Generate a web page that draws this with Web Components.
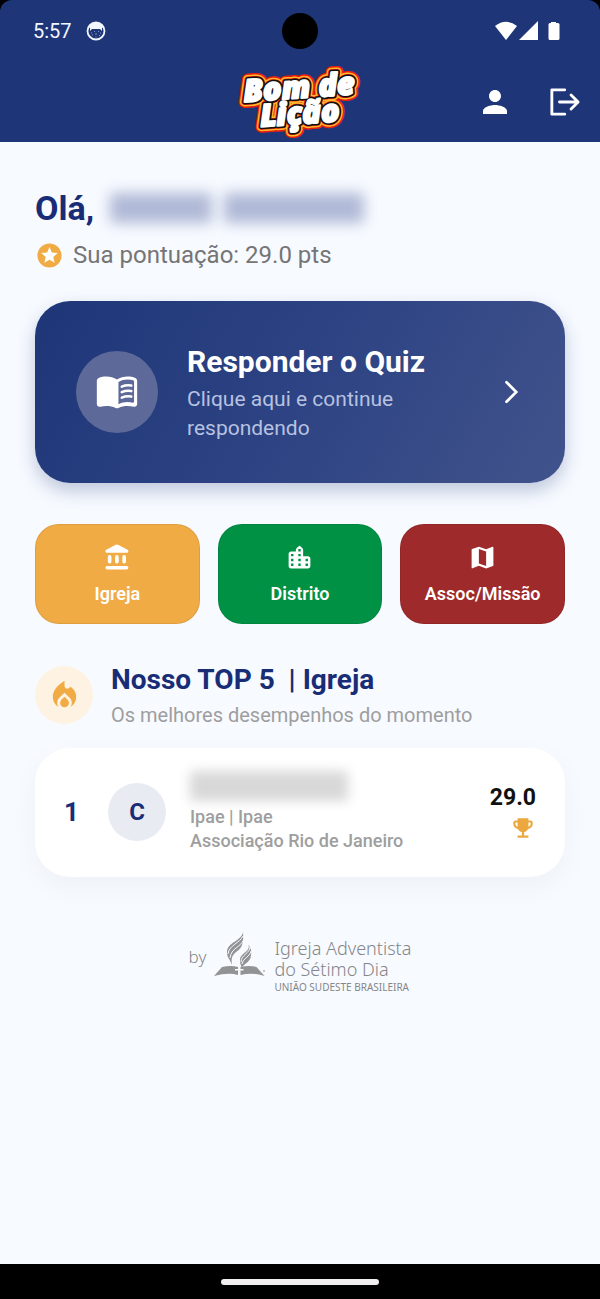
<!DOCTYPE html>
<html lang="pt-BR">
<head>
<meta charset="UTF-8">
<meta name="viewport" content="width=device-width, initial-scale=1">
<title>Bom de Lição</title>
<style>
    body {
        margin: 0;
        background: #000;
        font-family: Roboto, "Liberation Sans", sans-serif;
        --azul: #1e3678;
        --azul-texto: #182d75;
        --laranja: #f1ab45;
        --verde: #009145;
        --vermelho: #9f2a2b;
    }
</style>
</head>
<body>
<app-screen>
    <status-bar slot="top" time="5:57"></status-bar>
    <app-header slot="top"></app-header>
    <user-greeting points="29.0">Olá,</user-greeting>
    <quiz-card>
        <span slot="title">Responder o Quiz</span>
        <span slot="text">Clique aqui e continue respondendo</span>
    </quiz-card>
    <filter-row>
        <filter-button icon="bank" style="--cor: var(--laranja)">Igreja</filter-button>
        <filter-button icon="city" style="--cor: var(--verde)">Distrito</filter-button>
        <filter-button icon="map" style="--cor: var(--vermelho)">Assoc/Missão</filter-button>
    </filter-row>
    <top-heading>
        <span slot="title">Nosso TOP 5&nbsp; | Igreja</span>
        <span slot="text">Os melhores desempenhos do momento</span>
    </top-heading>
    <ranking-card position="1" initial="C" score="29.0">
        <span slot="church">Ipae | Ipae</span>
        <span slot="region">Associação Rio de Janeiro</span>
    </ranking-card>
    <brand-footer></brand-footer>
    <nav-bar slot="bottom"></nav-bar>
</app-screen>

<script>
// Ícones
const ICONS = {
    person: '<path d="M12 12c2.21 0 4-1.79 4-4s-1.79-4-4-4-4 1.79-4 4 1.79 4 4 4zm0 2c-2.67 0-8 1.34-8 4v2h16v-2c0-2.66-5.33-4-8-4z"/>',
    logout: '<path d="M12.5 3.9H3.9v16.2h8.600M9 12h12M16.700 7.300 21.400 12l-4.700 4.700" fill="none" stroke="currentColor" stroke-width="1.900" stroke-linejoin="round" stroke-linecap="round"/>',
    stars: '<circle cx="12" cy="12" r="9" fill="#fff"/><path d="M11.99 2C6.47 2 2 6.48 2 12s4.47 10 9.99 10C17.52 22 22 17.52 22 12S17.52 2 11.99 2zm4.24 16L12 15.45 7.77 18l1.12-4.81-3.73-3.23 4.92-.42L12 5l1.92 4.53 4.92.42-3.73 3.23L16.23 18z"/>',
    book: '<path d="M12 5.200C10.300 4 8.300 3.500 6.200 3.500c-1.500 0-2.900.2-4.200.8-.6.300-1 .9-1 1.500v12.800c0 1 .9 1.700 1.900 1.400 1-.3 2.200-.4 3.300-.4 1.700 0 3.700.3 5 1.100.5.300 1.100.3 1.600 0 1.300-.8 3.300-1.100 5-1.100 1.100 0 2.300.1 3.300.4 1 .300 1.900-.4 1.900-1.400V5.800c0-.6-.4-1.200-1-1.500-1.300-.6-2.700-.8-4.200-.8-2.100 0-4.100.5-5.800 1.700z"/><path d="M12.800 6.600c1.400-1 3.200-1.400 5-1.400 1.100 0 2.100.1 3 .4.300.1.500.4.500.7v10.900c0 .4-.300.7-.7.6-.9-.2-1.900-.3-2.800-.3-1.700 0-3.600.4-5 1.200z" fill="#5d6999"/><path d="M14.600 9.100c1.600-.7 3.400-.9 5.200-.6M14.600 12.100c1.600-.7 3.400-.9 5.200-.6M14.600 15.100c1.600-.7 3.400-.9 5.200-.6" fill="none" stroke="currentColor" stroke-width="1.400" stroke-linecap="round"/>',
    chevron: '<path d="M9 5.500 15.500 12 9 18.500" fill="none" stroke="currentColor" stroke-width="1.800" stroke-linecap="round"/>',
    bank: '<path d="M4 11.500v4a1.500 1.500 0 0 0 3 0v-4a1.500 1.500 0 0 0-3 0zm6 0v4a1.500 1.500 0 0 0 3 0v-4a1.500 1.500 0 0 0-3 0zM3.500 22h16a1.500 1.500 0 0 0 0-3h-16a1.500 1.500 0 0 0 0 3zM16 11.500v4a1.500 1.500 0 0 0 3 0v-4a1.500 1.500 0 0 0-3 0zM10.570 1.490l-7.900 4.160c-.41.210-.67.640-.67 1.110C2 7.450 2.550 8 3.240 8h16.530C20.450 8 21 7.450 21 6.760c0-.47-.26-.9-.67-1.110l-7.900-4.160a2 2 0 0 0-1.860 0z"/>',
    city: '<path d="M15 11V5.830c0-.53-.21-1.040-.59-1.410L12.700 2.710a1 1 0 0 0-1.410 0l-1.700 1.700C9.210 4.790 9 5.300 9 5.830V7H5c-1.100 0-2 .9-2 2v10c0 1.100.9 2 2 2h14c1.100 0 2-.9 2-2v-6c0-1.100-.9-2-2-2h-4zm-8 8H5v-2h2v2zm0-4H5v-2h2v2zm0-4H5V9h2v2zm6 8h-2v-2h2v2zm0-4h-2v-2h2v2zm0-4h-2V9h2v2zm0-4h-2V5h2v2zm6 12h-2v-2h2v2zm0-4h-2v-2h2v2z"/>',
    map: '<path d="M20.500 3l-.16.030L15 5.100 9 3 3.360 4.900c-.21.070-.36.250-.36.480V20.500c0 .28.220.5.5.5l.16-.03L9 18.900l6 2.100 5.640-1.900c.21-.07.36-.25.36-.48V3.500c0-.28-.22-.5-.5-.5zM15 19l-6-2.110V5l6 2.110V19z"/>',
    fire: '<path d="M12 12.900l-2.130 2.090C9.310 15.550 9 16.280 9 17.060 9 18.680 10.350 20 12 20s3-1.320 3-2.940c0-.78-.31-1.520-.87-2.070L12 12.900z"/><path d="M16 6l-.44.550C14.380 8.020 12 7.190 12 5.300V2S4 6 4 13c0 2.920 1.560 5.470 3.890 6.860-.56-.79-.89-1.760-.89-2.800 0-1.320.52-2.560 1.470-3.500L12 10.100l3.530 3.470c.95.930 1.470 2.170 1.470 3.500 0 1.020-.31 1.960-.85 2.750 1.890-1.150 3.290-3.060 3.710-5.300.66-3.550-1.070-6.900-3.860-8.520z"/>',
    trophy: '<path d="M19 5h-2V3H7v2H5c-1.100 0-2 .9-2 2v1c0 2.550 1.920 4.630 4.390 4.940.63 1.500 1.980 2.630 3.610 2.960V19H7v2h10v-2h-4v-3.100c1.630-.33 2.980-1.460 3.610-2.960C19.080 12.630 21 10.550 21 8V7c0-1.100-.9-2-2-2zM5 8V7h2v3.820C5.840 10.400 5 9.300 5 8zm14 0c0 1.300-.84 2.400-2 2.820V7h2v1z"/>'
};

class AppIcon extends HTMLElement {
    constructor() {
        super();
        this.attachShadow({ mode: 'open' });
    }

    connectedCallback() {
        this.shadowRoot.innerHTML = `
            <style>
                :host {
                    display: block;
                    flex: none;
                    width: var(--size, 24px);
                    height: var(--size, 24px);
                }

                svg {
                    display: block;
                    width: 100%;
                    height: 100%;
                    fill: currentColor;
                }
            </style>
            <svg viewBox="0 0 24 24" aria-hidden="true">${ICONS[this.getAttribute('name')]}</svg>
        `;
    }
}

// Estrutura da tela
class AppScreen extends HTMLElement {
    constructor() {
        super();
        this.attachShadow({ mode: 'open' });
    }

    connectedCallback() {
        this.shadowRoot.innerHTML = `
            <style>
                :host {
                    display: flex;
                    flex-direction: column;
                    min-height: 100vh;
                }

                .top {
                    background: var(--azul);
                    border-radius: 12px 12px 0 0;
                }

                main {
                    flex: 1;
                    display: flex;
                    flex-direction: column;
                    padding: 44px 35px 24px;
                    background: #f7faff;
                }
            </style>
            <div class="top"><slot name="top"></slot></div>
            <main><slot></slot></main>
            <slot name="bottom"></slot>
        `;
    }
}

class StatusBar extends HTMLElement {
    constructor() {
        super();
        this.attachShadow({ mode: 'open' });
    }

    connectedCallback() {
        this.shadowRoot.innerHTML = `
            <style>
                :host {
                    display: flex;
                    align-items: center;
                    height: 61px;
                    padding: 0 40px 0 33px;
                    color: #f2f6ff;
                    position: relative;
                    font-size: 20px;
                }

                .cat {
                    margin-left: 14px;
                }

                .icons {
                    margin-left: auto;
                }

                svg {
                    display: block;
                }

                /* furo da câmera */
                .camera {
                    position: absolute;
                    left: 50%;
                    top: 50%;
                    width: 36px;
                    height: 36px;
                    border-radius: 50%;
                    background: #000;
                    transform: translate(-50%, -50%);
                }
            </style>
            <span>${this.getAttribute('time')}</span>
            <svg class="cat" width="20" height="20" viewBox="0 0 20 20" aria-hidden="true">
                <circle cx="10" cy="10" r="8.500" fill="none" stroke="#f2f6ff" stroke-width="1.800"/>
                <path d="M2.500 7C4 3 7 1 10 1s6 2 7.500 6L16 6.500V10l-2-2H6l-2 2V6.500z" fill="#f2f6ff"/>
                <path d="M5 12h1M8 10.500h1M12 10.500h1M14 12h1M6 14h1M9 13h2M13 14.500h1M9.500 16h1" stroke="#8496c8" stroke-width="1"/>
            </svg>
            <span class="camera"></span>
            <svg class="icons" width="65" height="20" viewBox="0 0 65 20" fill="#fff" aria-hidden="true">
                <path d="M0 5Q11-3.500 22 5L11 19z"/>
                <path d="M43 0v19H24z"/>
                <path d="M56 1h5v1h2q1.500 0 1.500 1.500v14q0 1.500-1.500 1.500h-8q-1.500 0-1.500-1.500v-14Q53.500 2 55 2h1z"/>
            </svg>
        `;
    }
}

class AppHeader extends HTMLElement {
    constructor() {
        super();
        this.attachShadow({ mode: 'open' });
    }

    connectedCallback() {
        this.shadowRoot.innerHTML = `
            <style>
                :host {
                    display: grid;
                    grid-template-columns: 1fr auto 1fr;
                    align-items: center;
                    height: 81px;
                    padding: 0 18px;
                    color: #fff;
                }

                .logo {
                    grid-column: 2;
                    display: block;
                }

                nav {
                    display: flex;
                    justify-content: flex-end;
                    gap: 33px;
                }

                button {
                    padding: 0;
                    border: 0;
                    background: none;
                    color: inherit;
                    cursor: pointer;
                }

                app-icon {
                    --size: 36px;
                }
            </style>
            <svg class="logo" width="130" height="80" viewBox="0 0 130 80" role="img" aria-label="Bom de Lição">
                <g stroke-linejoin="round">
                    <use href="#marca" fill="#ec1c0c" stroke="#ec1c0c" stroke-width="12"/>
                    <use href="#marca" fill="#ffb82b" stroke="#ffb82b" stroke-width="9"/>
                    <use href="#marca" fill="#ec1c0c" stroke="#ec1c0c" stroke-width="6"/>
                    <use href="#marca" fill="#111" stroke="#111" stroke-width="5"/>
                </g>
                <g fill="#fff" stroke="#fff" stroke-width="2" stroke-linejoin="round">
                    <g id="marca" font-family="'Open Sans', sans-serif" font-weight="800" font-style="italic" text-anchor="middle" transform="rotate(-4 65 40)">
                        <text x="65" y="36" font-size="31">Bom de</text>
                        <text x="64" y="62" font-size="31">Lição</text>
                    </g>
                </g>
            </svg>
            <nav>
                <button aria-label="Perfil"><app-icon name="person"></app-icon></button>
                <button aria-label="Sair"><app-icon name="logout"></app-icon></button>
            </nav>
        `;
    }
}

// Saudação e pontuação
class UserGreeting extends HTMLElement {
    constructor() {
        super();
        this.attachShadow({ mode: 'open' });
    }

    connectedCallback() {
        this.shadowRoot.innerHTML = `
            <style>
                :host {
                    display: block;
                }

                h1 {
                    display: flex;
                    align-items: center;
                    gap: 16px;
                    margin: 0;
                    font-size: 34px;
                    line-height: 44px;
                    color: var(--azul-texto);
                }

                .name {
                    display: flex;
                    gap: 12px;
                    filter: blur(7px);
                }

                .name i {
                    height: 30px;
                    width: 102px;
                    background: #b0b9d6;
                }

                .name i + i {
                    width: 140px;
                }

                p {
                    display: flex;
                    align-items: center;
                    gap: 9px;
                    margin: 10px 0 0;
                    font-size: 24px;
                    line-height: 30px;
                    color: #757575;
                }

                app-icon {
                    --size: 29px;
                    color: var(--laranja);
                }
            </style>
            <h1><slot></slot><span class="name" aria-hidden="true"><i></i><i></i></span></h1>
            <p><app-icon name="stars"></app-icon><span>Sua pontuação: ${this.getAttribute('points')} pts</span></p>
        `;
    }
}

class QuizCard extends HTMLElement {
    constructor() {
        super();
        this.attachShadow({ mode: 'open' });
    }

    connectedCallback() {
        this.shadowRoot.innerHTML = `
            <style>
                :host {
                    display: block;
                    margin-top: 31px;
                }

                button {
                    display: flex;
                    align-items: center;
                    gap: 29px;
                    width: 100%;
                    min-height: 182px;
                    padding: 40px 36px 40px 41px;
                    border: 0;
                    border-radius: 35px;
                    background: linear-gradient(120deg, #1e3678, #2d4383 50%, #41538c);
                    box-shadow: 0 8px 18px rgba(30, 54, 120, 0.26);
                    color: #fff;
                    font: inherit;
                    text-align: left;
                    cursor: pointer;
                }

                .badge {
                    display: grid;
                    place-items: center;
                    flex: none;
                    width: 82px;
                    height: 82px;
                    border-radius: 50%;
                    background: #5d6999;
                }

                .badge app-icon {
                    --size: 44px;
                }

                .texts {
                    flex: 1;
                    padding-top: 2px;
                }

                .title {
                    display: block;
                    font-size: 30px;
                    font-weight: 700;
                    line-height: 38px;
                }

                .text {
                    display: block;
                    max-width: 260px;
                    margin-top: 4px;
                    font-size: 21px;
                    line-height: 29px;
                    color: #b7c2e0;
                }

                .arrow {
                    --size: 36px;
                }
            </style>
            <button>
                <span class="badge"><app-icon name="book"></app-icon></span>
                <span class="texts">
                    <span class="title"><slot name="title"></slot></span>
                    <span class="text"><slot name="text"></slot></span>
                </span>
                <app-icon class="arrow" name="chevron"></app-icon>
            </button>
        `;
    }
}

class FilterRow extends HTMLElement {
    constructor() {
        super();
        this.attachShadow({ mode: 'open' });
    }

    connectedCallback() {
        this.shadowRoot.innerHTML = `
            <style>
                :host {
                    display: grid;
                    grid-template-columns: repeat(3, 1fr);
                    gap: 18px;
                    margin-top: 41px;
                }
            </style>
            <slot></slot>
        `;
    }
}

class FilterButton extends HTMLElement {
    constructor() {
        super();
        this.attachShadow({ mode: 'open' });
    }

    connectedCallback() {
        this.shadowRoot.innerHTML = `
            <style>
                :host {
                    display: block;
                }

                button {
                    display: flex;
                    flex-direction: column;
                    align-items: center;
                    justify-content: center;
                    gap: 10px;
                    width: 100%;
                    min-height: 100px;
                    padding: 0;
                    border: 1px solid rgba(0, 0, 0, 0.08);
                    border-radius: 24px;
                    background: var(--cor);
                    color: #fff;
                    font: 600 18px/24px Roboto, sans-serif;
                    cursor: pointer;
                }

                app-icon {
                    --size: 29px;
                }
            </style>
            <button>
                <app-icon name="${this.getAttribute('icon')}"></app-icon>
                <slot></slot>
            </button>
        `;
    }
}

class TopHeading extends HTMLElement {
    constructor() {
        super();
        this.attachShadow({ mode: 'open' });
    }

    connectedCallback() {
        this.shadowRoot.innerHTML = `
            <style>
                :host {
                    display: flex;
                    align-items: center;
                    gap: 18px;
                    margin-top: 36px;
                }

                .badge {
                    display: grid;
                    place-items: center;
                    width: 58px;
                    height: 58px;
                    border-radius: 50%;
                    background: #fef2e2;
                    color: var(--laranja);
                }

                app-icon {
                    --size: 35px;
                }

                h2 {
                    margin: 0;
                    font-size: 28px;
                    line-height: 40px;
                    color: var(--azul-texto);
                }

                p {
                    margin: 0;
                    font-size: 20px;
                    line-height: 30px;
                    color: #9e9e9e;
                }
            </style>
            <span class="badge"><app-icon name="fire"></app-icon></span>
            <div>
                <h2><slot name="title"></slot></h2>
                <p><slot name="text"></slot></p>
            </div>
        `;
    }
}

// Linha do ranking
class RankingCard extends HTMLElement {
    constructor() {
        super();
        this.attachShadow({ mode: 'open' });
    }

    connectedCallback() {
        this.shadowRoot.innerHTML = `
            <style>
                :host {
                    display: flex;
                    align-items: center;
                    min-height: 129px;
                    margin-top: 18px;
                    padding: 0 29px 2px;
                    box-sizing: border-box;
                    border-radius: 35px;
                    background: #fff;
                    box-shadow: 0 10px 28px rgba(0, 0, 0, 0.04);
                }

                .position {
                    width: 44px;
                    font-size: 26px;
                    font-weight: 700;
                    color: var(--azul-texto);
                }

                .avatar {
                    display: grid;
                    place-items: center;
                    flex: none;
                    width: 58px;
                    height: 58px;
                    border-radius: 50%;
                    background: #e8ebf1;
                    color: var(--azul-texto);
                    font-size: 24px;
                    font-weight: 700;
                }

                .info {
                    flex: 1;
                    margin-left: 24px;
                    font-size: 18px;
                    font-weight: 500;
                    line-height: 24px;
                    color: #9e9e9e;
                }

                .name {
                    display: block;
                    width: 158px;
                    height: 30px;
                    margin-bottom: 4px;
                    background: #d8d8d8;
                    filter: blur(6px);
                }

                .line {
                    display: block;
                }

                .score {
                    display: flex;
                    flex-direction: column;
                    align-items: flex-end;
                    gap: 3px;
                    padding-top: 2px;
                    font-size: 23px;
                    font-weight: 700;
                    line-height: 28px;
                    color: #111;
                }

                app-icon {
                    --size: 26px;
                    color: #eaa83f;
                }
            </style>
            <span class="position">${this.getAttribute('position')}</span>
            <span class="avatar">${this.getAttribute('initial')}</span>
            <div class="info">
                <span class="name" aria-hidden="true"></span>
                <span class="line"><slot name="church"></slot></span>
                <span class="line"><slot name="region"></slot></span>
            </div>
            <div class="score">
                <span>${this.getAttribute('score')}</span>
                <app-icon name="trophy"></app-icon>
            </div>
        `;
    }
}

class BrandFooter extends HTMLElement {
    constructor() {
        super();
        this.attachShadow({ mode: 'open' });
    }

    connectedCallback() {
        this.shadowRoot.innerHTML = `
            <style>
                :host {
                    display: flex;
                    justify-content: center;
                    align-items: flex-start;
                    gap: 8px;
                    margin-top: 55px;
                    color: #858688;
                    font-family: "Noto Sans", sans-serif;
                }

                .by {
                    margin-top: 14px;
                    font-size: 17px;
                    font-weight: 300;
                    line-height: 22px;
                }

                svg {
                    display: block;
                }

                .names {
                    display: flex;
                    flex-direction: column;
                    margin-top: 6px;
                    font-size: 18px;
                    font-weight: 300;
                    line-height: 21px;
                }

                small {
                    font-size: 10px;
                    font-weight: 400;
                    line-height: 14px;
                }
            </style>
            <span class="by">by</span>
            <svg width="52" height="46" viewBox="0 0 52 46" aria-hidden="true">
                <g fill="#929395">
                    <path d="M0 44 8 35q9-2 16 0v2h-3v1.500h3V43q-9-3-24 1z"/>
                    <path d="M26.500 35q9-2 16 0l8 9q-12-4-24-1v-4.500h3V37h-3z"/>
                    <path d="M29 0C28 9 13 10 13 20c0 6 3 7 5 13-1-7 0-9 3-12 5-4 9-6 8-21z"/>
                    <path d="M34 12c4 7-8 9-8 16 0 4 1 5 2 8 1-4 9-6 9-13 1-5-1-8-3-11z"/>
                </g>
                <g fill="none" stroke="#f7faff" stroke-width="1">
                    <path d="M29 4C26 11 15 13 14 22"/>
                    <path d="M29.500 8C27 15 17 16 16 26"/>
                    <path d="M36 15c0 6-9 8-9 15"/>
                    <path d="M37 19c-1 6-8 7-9 13"/>
                </g>
                <circle cx="50" cy="39" r="1" fill="#b5b6b8"/>
            </svg>
            <div class="names">
                <span>Igreja Adventista</span>
                <span>do Sétimo Dia</span>
                <small>UNIÃO SUDESTE BRASILEIRA</small>
            </div>
        `;
    }
}

class NavBar extends HTMLElement {
    constructor() {
        super();
        this.attachShadow({ mode: 'open' });
    }

    connectedCallback() {
        this.shadowRoot.innerHTML = `
            <style>
                :host {
                    display: flex;
                    align-items: center;
                    justify-content: center;
                    height: 35px;
                    background: #000;
                }

                span {
                    width: 158px;
                    height: 6px;
                    border-radius: 3px;
                    background: #f0eeee;
                }
            </style>
            <span></span>
        `;
    }
}

// Registrar os componentes
customElements.define('app-icon', AppIcon);
customElements.define('app-screen', AppScreen);
customElements.define('status-bar', StatusBar);
customElements.define('app-header', AppHeader);
customElements.define('user-greeting', UserGreeting);
customElements.define('quiz-card', QuizCard);
customElements.define('filter-row', FilterRow);
customElements.define('filter-button', FilterButton);
customElements.define('top-heading', TopHeading);
customElements.define('ranking-card', RankingCard);
customElements.define('brand-footer', BrandFooter);
customElements.define('nav-bar', NavBar);
</script>
</body>
</html>
